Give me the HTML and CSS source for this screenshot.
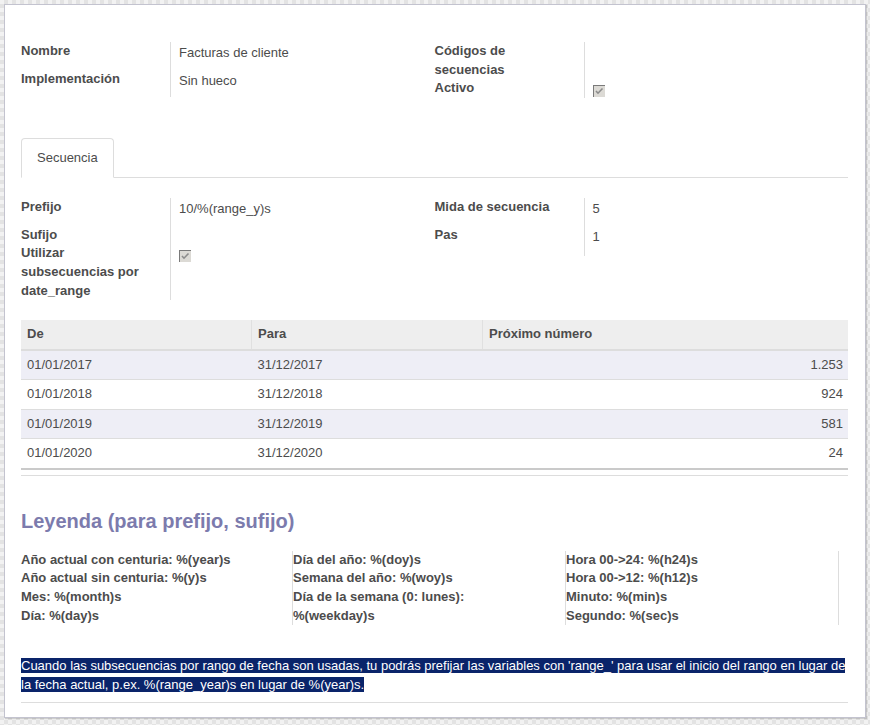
FILE: index.html
```html
<!DOCTYPE html>
<html>
<head>
    <title>Secuencia</title>
    <link rel="stylesheet" href="styles.css">
</head>
<body>
    <div class="sheet">
        <div class="groups">
            <div class="group">
                <div class="lbl">Nombre</div>
                <div class="val">Facturas de cliente</div>
                <div class="lbl">Implementación</div>
                <div class="val">Sin hueco</div>
            </div>
            <div class="group">
                <div class="lbl">Códigos de secuencias</div>
                <div class="val empty"></div>
                <div class="lbl">Activo</div>
                <div class="val check"><span class="box"><svg width="12" height="12" viewBox="0 0 12 12"><path d="M3 6l2 2.2L9.5 3.5" fill="none" stroke="#8c8c8c" stroke-width="1.6"/></svg></span></div>
            </div>
        </div>

        <div class="tabs">
            <div class="tab">Secuencia</div>
        </div>

        <div class="tab-body">
            <div class="groups">
                <div class="group">
                    <div class="lbl">Prefijo</div>
                    <div class="val">10/%(range_y)s</div>
                    <div class="lbl">Sufijo</div>
                    <div class="val empty"></div>
                    <div class="lbl">Utilizar subsecuencias por date_range</div>
                    <div class="val check"><span class="box"><svg width="12" height="12" viewBox="0 0 12 12"><path d="M3 6l2 2.2L9.5 3.5" fill="none" stroke="#8c8c8c" stroke-width="1.6"/></svg></span></div>
                </div>
                <div class="group">
                    <div class="lbl">Mida de secuencia</div>
                    <div class="val">5</div>
                    <div class="lbl">Pas</div>
                    <div class="val last">1</div>
                </div>
            </div>

            <div class="list">
                <table class="ranges">
                    <thead>
                        <tr>
                            <th class="col-from">De</th>
                            <th class="col-to">Para</th>
                            <th>Próximo número</th>
                        </tr>
                    </thead>
                    <tbody>
                        <tr><td>01/01/2017</td><td>31/12/2017</td><td class="num">1.253</td></tr>
                        <tr><td>01/01/2018</td><td>31/12/2018</td><td class="num">924</td></tr>
                        <tr><td>01/01/2019</td><td>31/12/2019</td><td class="num">581</td></tr>
                        <tr><td>01/01/2020</td><td>31/12/2020</td><td class="num">24</td></tr>
                    </tbody>
                </table>
            </div>

            <h3 class="legend-title">Leyenda (para prefijo, sufijo)</h3>
            <div class="legend">
                <div class="legend-col">
                    <div>Año actual con centuria: <span class="code">%(year)s</span></div>
                    <div>Año actual sin centuria: <span class="code">%(y)s</span></div>
                    <div>Mes: <span class="code">%(month)s</span></div>
                    <div>Día: <span class="code">%(day)s</span></div>
                </div>
                <div class="legend-col">
                    <div>Día del año: <span class="code">%(doy)s</span></div>
                    <div>Semana del año: <span class="code">%(woy)s</span></div>
                    <div>Día de la semana (0: lunes): <span class="code">%(weekday)s</span></div>
                </div>
                <div class="legend-col">
                    <div>Hora 00-&gt;24: <span class="code">%(h24)s</span></div>
                    <div>Hora 00-&gt;12: <span class="code">%(h12)s</span></div>
                    <div>Minuto: <span class="code">%(min)s</span></div>
                    <div>Segundo: <span class="code">%(sec)s</span></div>
                </div>
            </div>

            <p class="note"><span class="selected">Cuando las subsecuencias por rango de fecha son usadas, tu podrás prefijar las variables con 'range_' para usar el inicio del rango en lugar de la fecha actual, p.ex. %(range_year)s en lugar de %(year)s. </span></p>
            <hr class="sep">
        </div>
    </div>
</body>
</html>
```

FILE: styles.css
```css
/* Page background */
body {
    margin: 0;
    padding: 4px;
    font-family: "Liberation Sans", Arial, sans-serif;
    font-size: 13px;
    line-height: 1.42857143;
    color: #4c4c4c;
    background-color: #f2f2f2;
    background-image:
        linear-gradient(45deg, #e3e3e3 25%, transparent 25%, transparent 75%, #e3e3e3 75%),
        linear-gradient(45deg, #e3e3e3 25%, transparent 25%, transparent 75%, #e3e3e3 75%);
    background-size: 8px 8px;
    background-position: 0 0, 4px 4px;
}

/* Form sheet */
.sheet {
    background: #fff;
    border: 1px solid #c3c3cf;
    box-shadow: 1px 1px 1px rgba(0, 0, 0, 0.15);
    padding: 37px 17px 14px 16px;
}

/* Field groups */
.groups {
    display: grid;
    grid-template-columns: 1fr 1fr;
}

.group {
    display: grid;
    grid-template-columns: 149px 1fr;
    align-content: start;
}

.lbl {
    font-weight: bold;
    padding-right: 16px;
}

.val {
    border-left: 1px solid #ddd;
    padding: 2px 0 7px 8px;
}

.val.last {
    padding-bottom: 10px;
}

.val.empty,
.val.check {
    padding: 0 0 0 8px;
}

.box {
    display: block;
    width: 12px;
    height: 12px;
    margin-top: 6px;
    background: #dcdad5;
    border-top: 1px solid #7a7a7a;
    border-left: 1px solid #7a7a7a;
    box-sizing: border-box;
}

.box svg {
    display: block;
    margin: -1px 0 0 -1px;
}

/* Notebook tabs */
.tabs {
    margin-top: 40px;
    border-bottom: 1px solid #ddd;
    display: flex;
}

.tab {
    padding: 10px 15px;
    border: 1px solid #ddd;
    border-bottom-color: #fff;
    border-radius: 4px 4px 0 0;
    margin-bottom: -1px;
    background: #fff;
}

.tab-body {
    padding-top: 20px;
}

/* One2many list */
.list {
    margin-top: 20px;
    border-bottom: 1px solid #ddd;
    padding-bottom: 5px;
}

.ranges {
    width: 100%;
    border-collapse: collapse;
    border-bottom: 2px solid #cacaca;
}

.ranges th {
    background: #eee;
    text-align: left;
    padding: 5px 6px;
    border-bottom: 2px solid #ddd;
}

.ranges th + th {
    border-left: 1px solid #e0e0e0;
}

.col-from,
.col-to {
    width: 218px;
}

.ranges td {
    padding: 5px 6px;
    border-top: 1px solid #ddd;
}

.ranges tbody tr:nth-child(odd) {
    background: #eeeef6;
}

.ranges td.num {
    text-align: right;
    padding-right: 5px;
}

/* Legend */
.legend-title {
    font-size: 20px;
    line-height: 22px;
    color: #7c7bad;
    margin: 34px 0 19px;
}

.legend {
    display: grid;
    grid-template-columns: 272px 273px 273px;
    font-weight: bold;
}

.legend-col {
    border-right: 1px solid #ddd;
    padding-right: 22px;
}

.code {
    white-space: nowrap;
}

.note {
    margin: 32px 0 0;
}

.selected {
    background: #0a246a;
    color: #fff;
}

.sep {
    border: 0;
    border-top: 1px solid #ddd;
    margin: 8px 0 0;
}
```
